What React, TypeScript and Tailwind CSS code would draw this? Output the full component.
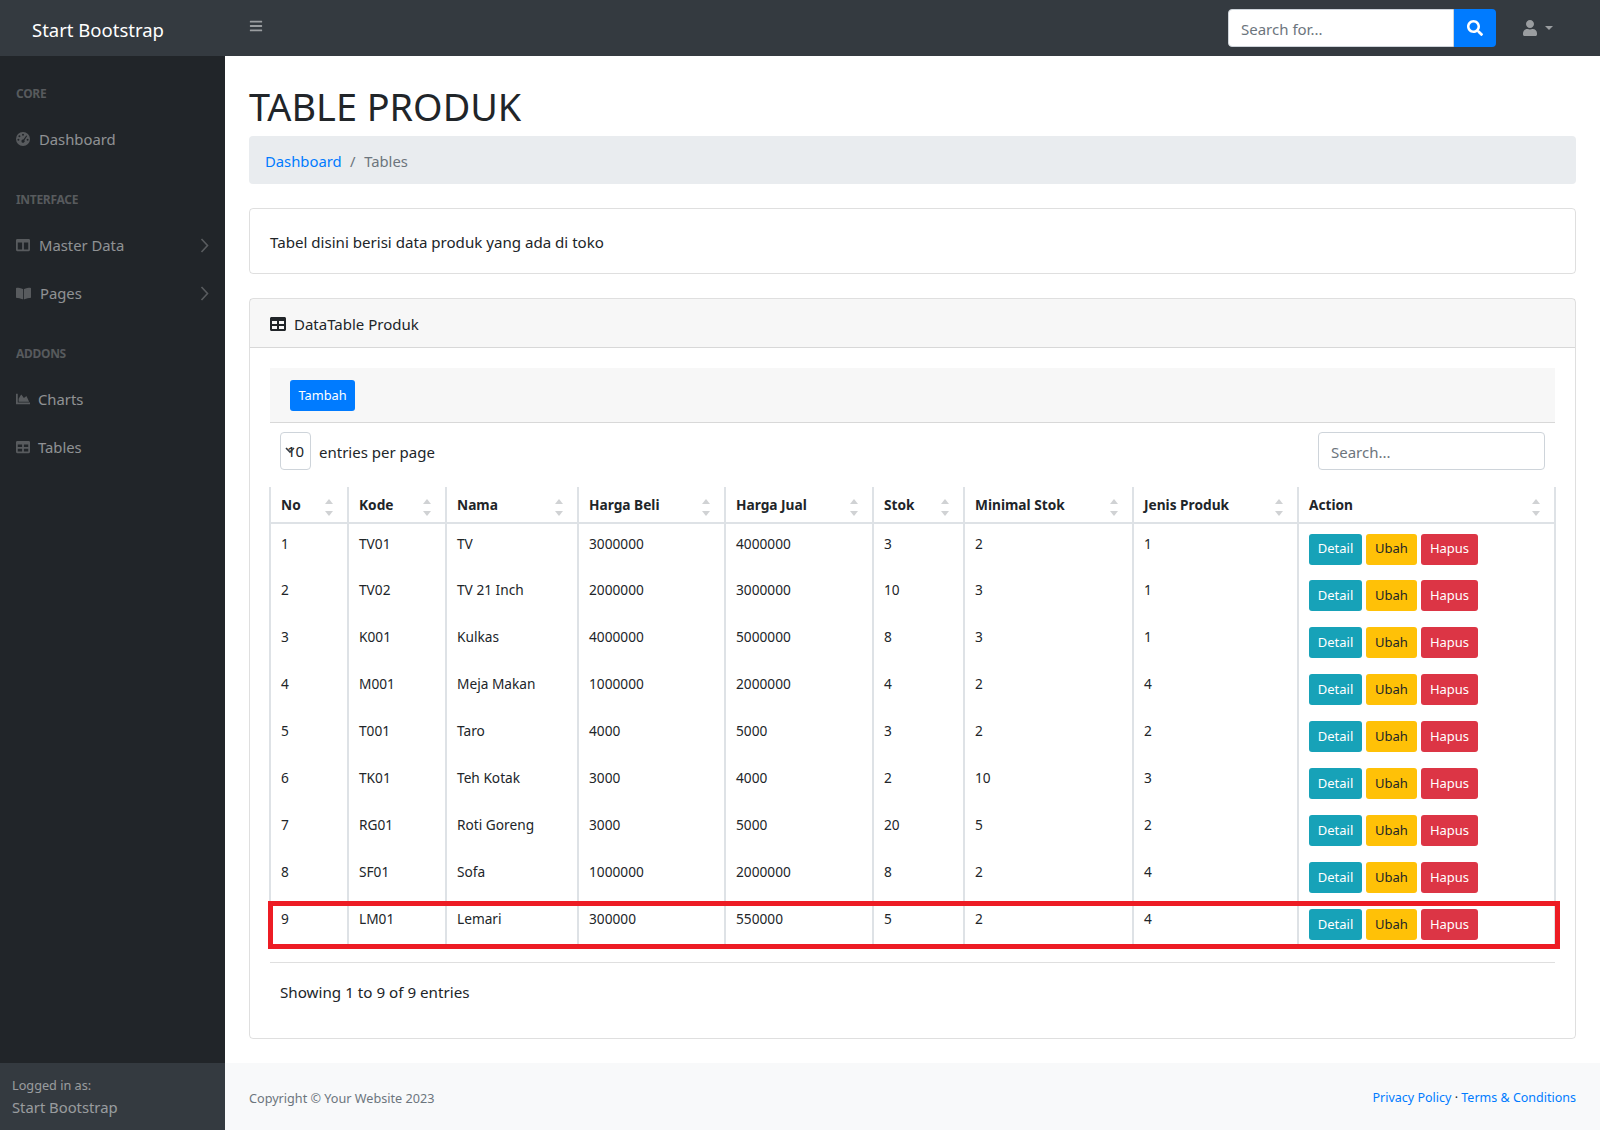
import { FaBars, FaBookOpen, FaChartArea, FaColumns, FaSearch, FaTable, FaUser } from 'react-icons/fa'

const COLUMNS = [
  { name: 'No', width: 'w-[78px]' },
  { name: 'Kode', width: 'w-[98px]' },
  { name: 'Nama', width: 'w-[132px]' },
  { name: 'Harga Beli', width: 'w-[147px]' },
  { name: 'Harga Jual', width: 'w-[148px]' },
  { name: 'Stok', width: 'w-[91px]' },
  { name: 'Minimal Stok', width: 'w-[169px]' },
  { name: 'Jenis Produk', width: 'w-[165px]' },
  { name: 'Action', width: 'w-[257px]' },
]

const ROWS = [
  ['1', 'TV01', 'TV', '3000000', '4000000', '3', '2', '1'],
  ['2', 'TV02', 'TV 21 Inch', '2000000', '3000000', '10', '3', '1'],
  ['3', 'K001', 'Kulkas', '4000000', '5000000', '8', '3', '1'],
  ['4', 'M001', 'Meja Makan', '1000000', '2000000', '4', '2', '4'],
  ['5', 'T001', 'Taro', '4000', '5000', '3', '2', '2'],
  ['6', 'TK01', 'Teh Kotak', '3000', '4000', '2', '10', '3'],
  ['7', 'RG01', 'Roti Goreng', '3000', '5000', '20', '5', '2'],
  ['8', 'SF01', 'Sofa', '1000000', '2000000', '8', '2', '4'],
  ['9', 'LM01', 'Lemari', '300000', '550000', '5', '2', '4'],
]

function GaugeIcon() {
  return (
    <svg width="14" height="14" viewBox="0 0 14 14" fill="currentColor">
      <path
        fillRule="evenodd"
        d="M7 0a7 7 0 1 1 0 14A7 7 0 0 1 7 0Zm0 1.8a1 1 0 1 0 0 2 1 1 0 0 0 0-2ZM3.4 3.2a1 1 0 1 0 0 2 1 1 0 0 0 0-2Zm-1 3.6a1 1 0 1 0 0 2 1 1 0 0 0 0-2Zm9.2 0a1 1 0 1 0 0 2 1 1 0 0 0 0-2Zm-1.3-3.4L7.4 7.6a1.6 1.6 0 1 0 1 .7l2.8-4.2-.9-.7Z"
      />
    </svg>
  )
}

function SideHeading({ label }: { label: string }) {
  return <div className="px-4 pt-7 pb-3 text-[12px] font-bold leading-[18px] tracking-[-0.3px] text-white/25">{label}</div>
}

function SideLink({ icon, label, caret, gap = 'gap-[9px]' }: { icon: React.ReactNode; label: string; caret?: boolean; gap?: string }) {
  return (
    <div className={`flex h-12 items-center ${gap} px-4 text-white/50`}>
      <span className="text-white/25">{icon}</span>
      <span className="pt-[1px] text-[14.8px]">{label}</span>
      {caret && (
        <svg width="9" height="15" viewBox="0 0 9 15" fill="none" stroke="currentColor" strokeWidth="1.6" className="ml-auto text-white/25">
          <path d="M1.5 1 L7.5 7.5 L1.5 14" />
        </svg>
      )}
    </div>
  )
}

function SortArrows() {
  return (
    <svg width="8" height="17" viewBox="0 0 8 17" className="absolute right-[14px] top-[12px]" fill="#d0d2d4">
      <path d="M4 0 L8 5 H0 Z" />
      <path d="M4 17 L8 12 H0 Z" />
    </svg>
  )
}

export default function App() {
  return (
    <div className="flex h-screen flex-col overflow-hidden font-['Noto_Sans',sans-serif] text-[#212529]">
      {/* Top bar */}
      <nav className="flex h-14 shrink-0 items-center bg-[#343a40]">
        <div className="w-[225px] pl-8 pt-1 text-[18.5px] text-white">Start Bootstrap</div>
        <FaBars size={14} className="ml-6 -mt-1 text-white/50" />
        <div className="ml-auto flex h-[38px] w-[268px]">
          <input
            placeholder="Search for..."
            className="h-full w-[226px] rounded-l border border-[#ced4da] bg-white px-3 pt-[2px] text-[15px] placeholder:text-[#6c757d]"
          />
          <button className="flex w-[42px] items-center justify-center rounded-r bg-[#007bff] text-white">
            <FaSearch size={16} />
          </button>
        </div>
        <div className="ml-[26px] mr-[47px] flex items-center gap-[7px] text-white/50">
          <FaUser size={16} />
          <span className="h-0 w-0 border-x-[4px] border-t-[4px] border-x-transparent border-t-white/50" />
        </div>
      </nav>

      <div className="flex min-h-0 flex-1">
        {/* Sidebar */}
        <aside className="flex w-[225px] shrink-0 flex-col justify-between bg-[#212529]">
          <div className="pt-[1px]">
            <SideHeading label="CORE" />
            <SideLink icon={<GaugeIcon />} label="Dashboard" />
            <SideHeading label="INTERFACE" />
            <SideLink icon={<FaColumns size={14} />} label="Master Data" caret />
            <SideLink icon={<FaBookOpen size={15} />} label="Pages" caret />
            <SideHeading label="ADDONS" />
            <SideLink icon={<FaChartArea size={14} />} label="Charts" gap="gap-2" />
            <SideLink icon={<FaTable size={14} />} label="Tables" gap="gap-2" />
          </div>
          <div className="h-[67px] bg-[#343a40] px-3 pt-3 text-white/50">
            <div className="text-[12.7px] leading-[20px]">Logged in as:</div>
            <div className="text-[14.8px] leading-6">Start Bootstrap</div>
          </div>
        </aside>

        {/* Main */}
        <main className="flex min-w-0 flex-1 flex-col justify-between">
          <div className="px-6">
            <h1 className="mt-6 h-12 text-[37.8px] leading-[54px]">TABLE PRODUK</h1>
            <div className="mt-2 mb-6 flex h-12 items-center gap-[8.5px] rounded bg-[#e9ecef] px-4 pt-[2px] text-[14.8px]">
              <span className="text-[#007bff]">Dashboard</span>
              <span className="text-[#6c757d]">/</span>
              <span className="text-[#6c757d]">Tables</span>
            </div>

            <div className="mb-6 flex h-[66px] items-center rounded border border-black/[.125] px-5 pt-[2px] text-[15.1px]">
              Tabel disini berisi data produk yang ada di toko
            </div>

            <div className="rounded border border-black/[.125]">
              <div className="flex h-[49px] items-center gap-2 border-b border-black/[.125] bg-black/[.03] px-5 text-[15px]">
                <FaTable size={16} className="mt-[1px]" />
                <span className="pt-[2px]">DataTable Produk</span>
              </div>
              <div className="px-5 pt-5">
                {/* Toolbar */}
                <div className="flex h-[55px] items-center border-b border-black/[.125] bg-black/[.03] px-5">
                  <button className="h-[31px] w-[65px] rounded-[3px] bg-[#007bff] pt-[2px] text-[12.8px] text-white">Tambah</button>
                </div>
                <div className="flex h-[64px] items-start justify-between px-[10px] pt-[9px]">
                  <div className="flex items-center gap-2">
                    <div className="relative flex h-[38px] w-[31px] items-center justify-center rounded border border-[#ced4da] pt-[1px] text-[15px]">
                      10
                      <svg width="10" height="7" viewBox="0 0 10 7" className="absolute left-[4px] top-[14px]" fill="none" stroke="#343a40" strokeWidth="1.6">
                        <path d="M1 1 L5 5 L9 1" />
                      </svg>
                    </div>
                    <span className="pt-[2px] text-[15px]">entries per page</span>
                  </div>
                  <input
                    placeholder="Search..."
                    className="h-[38px] w-[227px] rounded border border-[#ced4da] px-3 pt-[2px] text-[15px] placeholder:text-[#6c757d]"
                  />
                </div>

                {/* Table */}
                <div className="relative">
                  <table className="-ml-px w-[1285px] table-fixed border-collapse text-[13.7px]">
                    <colgroup>
                      {COLUMNS.map((c) => (
                        <col key={c.name} className={c.width} />
                      ))}
                    </colgroup>
                    <thead>
                      <tr>
                        {COLUMNS.map((c) => (
                          <th key={c.name} className="relative h-[36px] border-x-2 border-b-2 border-x-[#dee2e6] border-b-[#dee2e6] px-[10px] pt-[2px] text-left font-bold">
                            {c.name}
                            <SortArrows />
                          </th>
                        ))}
                      </tr>
                    </thead>
                    <tbody>
                      {ROWS.map((row) => (
                        <tr key={row[0]} className="h-[47px]">
                          {row.map((cell, i) => (
                            <td key={i} className="border-x-2 border-[#dee2e6] px-[10px] pt-[9px] align-top leading-[21px]">
                              {cell}
                            </td>
                          ))}
                          <td className="border-x-2 border-[#dee2e6] px-[10px] pt-[4px] align-middle">
                            <div className="flex gap-1">
                              <button className="h-[31px] w-[53px] rounded-[3px] bg-[#17a2b8] text-[13px] text-white">Detail</button>
                              <button className="h-[31px] w-[51px] rounded-[3px] bg-[#ffc107] text-[13px] text-[#212529]">Ubah</button>
                              <button className="h-[31px] w-[57px] rounded-[3px] bg-[#dc3545] text-[13px] text-white">Hapus</button>
                            </div>
                          </td>
                        </tr>
                      ))}
                    </tbody>
                  </table>
                  <div className="absolute -left-[2px] bottom-[-3px] h-[48px] w-[1292px] border-[5px] border-[#ed1c24]" />
                </div>

                <div className="mt-[16px] flex h-[76px] items-start border-t border-black/[.125] px-[10px] pt-[18px] text-[15.2px]">
                  Showing 1 to 9 of 9 entries
                </div>
              </div>
            </div>
          </div>

          <footer className="flex h-[67px] items-center justify-between bg-[#f8f9fa] px-6 pt-1 text-[#6c757d]">
            <span className="-mt-[1px] text-[12.65px]">Copyright © Your Website 2023</span>
            <span className="text-[12.5px]">
              <span className="text-[#007bff]">Privacy Policy</span>
              <span className="text-[#212529]"> · </span>
              <span className="text-[#007bff]">Terms &amp; Conditions</span>
            </span>
          </footer>
        </main>
      </div>
    </div>
  )
}
